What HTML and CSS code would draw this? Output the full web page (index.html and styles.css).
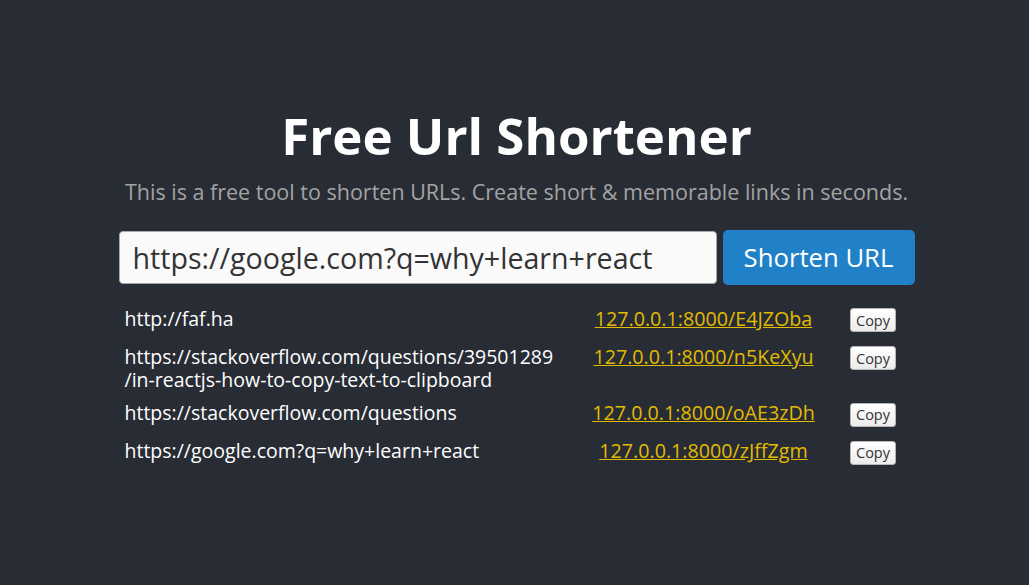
FILE: index.html
```html
<!DOCTYPE html>
<html lang="en">
<head>
<meta charset="utf-8">
<title>Free Url Shortener</title>
<link rel="stylesheet" href="styles.css">
</head>
<body>
<main class="app">
  <h1 class="title">Free Url Shortener</h1>
  <p class="subtitle">This is a free tool to shorten URLs. Create short &amp; memorable links in seconds.</p>
  <form class="shorten-form">
    <input class="url-input" type="text" value="https://google.com?q=why+learn+react">
    <button class="shorten-btn" type="button">Shorten URL</button>
  </form>
  <div class="links">
    <div class="row">
      <div class="cell-long">http://faf.ha</div>
      <div class="cell-short"><a href="#">127.0.0.1:8000/E4JZOba</a></div>
      <div class="cell-copy"><button class="copy-btn" type="button">Copy</button></div>
    </div>
    <div class="row">
      <div class="cell-long">https://stackoverflow.com/questions/39501289/in-reactjs-how-to-copy-text-to-clipboard</div>
      <div class="cell-short"><a href="#">127.0.0.1:8000/n5KeXyu</a></div>
      <div class="cell-copy"><button class="copy-btn" type="button">Copy</button></div>
    </div>
    <div class="row">
      <div class="cell-long">https://stackoverflow.com/questions</div>
      <div class="cell-short"><a href="#">127.0.0.1:8000/oAE3zDh</a></div>
      <div class="cell-copy"><button class="copy-btn" type="button">Copy</button></div>
    </div>
    <div class="row">
      <div class="cell-long">https://google.com?q=why+learn+react</div>
      <div class="cell-short"><a href="#">127.0.0.1:8000/zJffZgm</a></div>
      <div class="cell-copy"><button class="copy-btn" type="button">Copy</button></div>
    </div>
  </div>
</main>
</body>
</html>
```

FILE: styles.css
```css
html, body {
  margin: 0;
  padding: 0;
}

body {
  background: #282c34;
  color: #ffffff;
  font-family: "Open Sans", "Noto Sans", sans-serif;
  min-height: 100vh;
}

.app {
  display: flex;
  flex-direction: column;
  align-items: center;
  padding: 102px 0 0 4px;
}

.title {
  margin: 0;
  font-size: 51px;
  line-height: 66px;
  font-weight: 700;
}

.subtitle {
  margin: 10px 0 0;
  font-size: 21.5px;
  line-height: 28px;
  color: #a3a3a3;
}

.shorten-form {
  display: flex;
  align-items: center;
  gap: 6px;
  width: 796px;
  margin-top: 24px;
}

.url-input {
  box-sizing: border-box;
  flex: 1;
  height: 53px;
  padding: 0 13px;
  border: 1px solid #a9a9a9;
  border-radius: 4px;
  background: #fafafa;
  color: #333333;
  font-family: inherit;
  font-size: 28.6px;
  outline: none;
}

.shorten-btn {
  box-sizing: border-box;
  width: 192px;
  height: 55px;
  border: none;
  border-radius: 5px;
  background: #2181c8;
  color: #ffffff;
  font-family: inherit;
  font-size: 25.7px;
  padding: 0;
}

.links {
  width: 796px;
  margin-top: 16px;
}

.row {
  display: grid;
  grid-template-columns: 457px 256px 83px;
  align-items: baseline;
}

.cell-long {
  padding: 5px 19px 5px 6px;
  font-size: 19.5px;
  line-height: 23px;
  overflow-wrap: anywhere;
}

.cell-short {
  text-align: center;
  font-size: 19.7px;
  line-height: 23px;
}

.cell-short a {
  color: #e2bb00;
}

.cell-copy {
  text-align: center;
}

.copy-btn {
  box-sizing: border-box;
  height: 24px;
  margin: 7px 0;
  padding: 0 5px;
  border: 1px solid #b5b5b5;
  border-radius: 3px;
  background: linear-gradient(#ffffff, #ececec);
  color: #333333;
  font-family: inherit;
  font-size: 14.5px;
}
```
